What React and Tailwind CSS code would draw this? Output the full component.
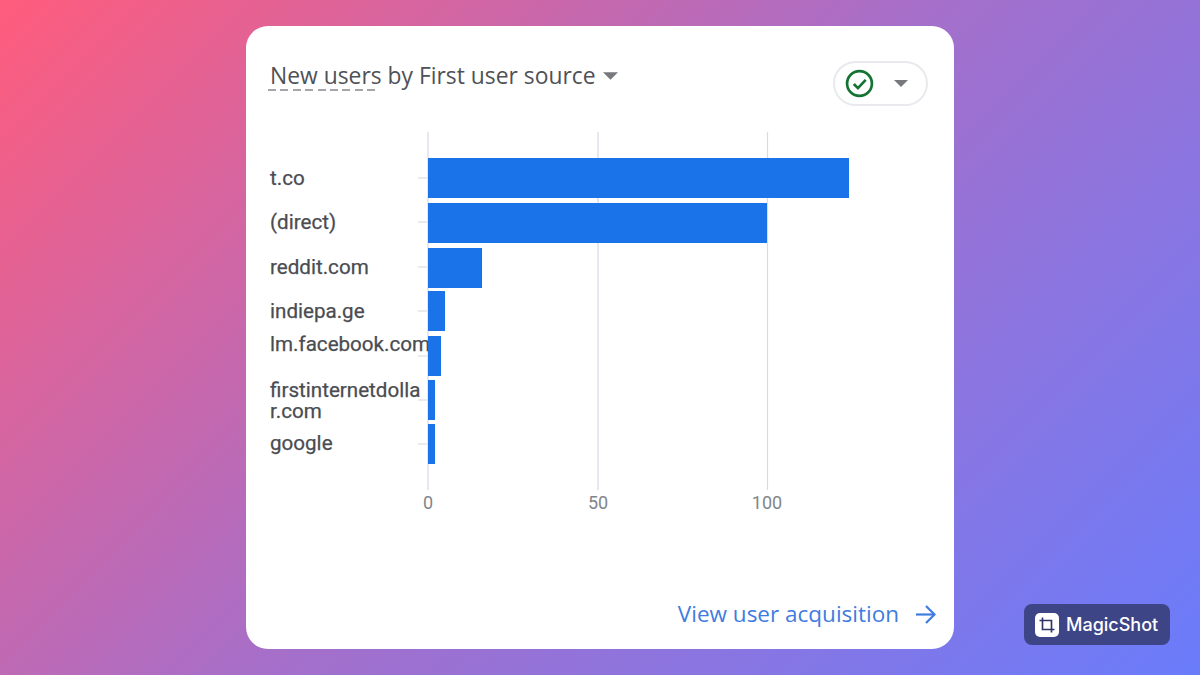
const bars = [
  { y: 26, end: 849, tick: 46 },
  { y: 71, end: 767, tick: 90 },
  { y: 116, end: 482, tick: 135 },
  { y: 159, end: 445, tick: 179 },
  { y: 204, end: 441, tick: 224 },
  { y: 248, end: 435, tick: 268 },
  { y: 292, end: 435, tick: 312 },
];

const labels = [
  { text: 't.co', y: 53 },
  { text: '(direct)', y: 97 },
  { text: 'reddit.com', y: 142 },
  { text: 'indiepa.ge', y: 186 },
  { text: 'lm.facebook.com', y: 219 },
  { text: 'firstinternetdolla', y: 265 },
  { text: 'r.com', y: 285.5 },
  { text: 'google', y: 318 },
];

const axis = [
  { text: '0', x: 182 },
  { text: '50', x: 352 },
  { text: '100', x: 521 },
];

// chart coordinates: x relative to card left edge, y relative to first gridline top
function BarChart() {
  return (
    <svg width="708" height="390" viewBox="0 0 708 390" className="block">
      {[182, 352, 521.5].map((x) => (
        <line key={x} x1={x} x2={x} y1="0" y2="358" stroke="#d8dbe6" strokeWidth="1.25" />
      ))}
      {bars.map((b) => (
        <line key={b.tick} x1="172" x2="182" y1={b.tick} y2={b.tick} stroke="#e4e5e8" strokeWidth="1.5" />
      ))}
      <g fill="#4a4c51" fontSize="20.6" style={{ fontFamily: 'Roboto, sans-serif' }}>
        {labels.map((l) => (
          <text key={l.text} x="24" y={l.y} stroke="#4a4c51" strokeWidth="0.25">{l.text}</text>
        ))}
      </g>
      {bars.map((b) => (
        <rect key={b.y} x="182" y={b.y} width={b.end - 246 - 182} height="40" fill="#1a73e8" />
      ))}
      <g fill="#80868b" fontSize="18" textAnchor="middle" style={{ fontFamily: 'Roboto, sans-serif' }}>
        {axis.map((a) => (
          <text key={a.text} x={a.x} y="377">{a.text}</text>
        ))}
      </g>
    </svg>
  );
}

function Caret({ className }) {
  return (
    <svg viewBox="0 0 16 8" className={className} fill="#76787d">
      <path d="M0 0h16l-8 8z" />
    </svg>
  );
}

export default function App() {
  return (
    <div className="relative flex h-[675px] w-[1200px] items-start justify-center overflow-hidden bg-[linear-gradient(135deg,#ff5c7c_0%,#a56fca_50%,#6a7cfb_100%)] pt-[26px] font-['Open_Sans',sans-serif]">
      <div className="flex h-[623px] w-[708px] flex-col rounded-[22px] bg-white">
        <div className="flex items-start justify-between pl-6 pr-[26px] pt-[35px]">
          <div className="flex items-center">
            <span className="text-[22.85px] font-medium leading-[30px] text-[#4f5156]">
              <span className="relative">
                New users
                <span className="absolute -left-[2px] right-[3px] top-[29px] h-[2px] bg-[repeating-linear-gradient(90deg,#a3a5a9_0_8px,transparent_8px_12.4px)]" />
              </span>{' '}
              by First user source
            </span>
            <Caret className="ml-[7px] h-[8px] w-[15px]" />
          </div>
          <div className="flex h-[45px] w-[95px] items-center rounded-full border-2 border-[#e8eaed] pl-[10px]">
            <svg viewBox="0 0 28 28" className="h-[29px] w-[29px]" fill="none">
              <circle cx="14" cy="14" r="12" stroke="#137333" strokeWidth="2.6" />
              <path d="M8.5 14.5l4 4 7.5-8" stroke="#137333" strokeWidth="2.6" />
            </svg>
            <Caret className="ml-[20px] h-[7px] w-[14px]" />
          </div>
        </div>
        <div className="mt-[26px]">
          <BarChart />
        </div>
        <div className="mt-[77px] flex items-center justify-end gap-[17px] pr-[18px]">
          <span className="text-[22.5px] font-medium leading-[30px] text-[#3f7ce0]">View user acquisition</span>
          <svg viewBox="0 0 20 19" className="h-[19px] w-[20px]" fill="none" stroke="#3f7ce0" strokeWidth="2.2">
            <path d="M0 9.5h18" />
            <path d="M10 1l8.5 8.5L10 18" />
          </svg>
        </div>
      </div>
      <div className="absolute left-[1024px] top-[604px] flex h-[41px] w-[146px] items-center rounded-[8px] bg-[#3d4586] pl-[11px]">
        <div className="flex h-[24px] w-[24px] items-center justify-center rounded-[5px] bg-white">
          <svg viewBox="0 0 24 24" className="h-[18px] w-[18px]" fill="none" stroke="#2f3566" strokeWidth="2.2">
            <path d="M6 2v16h16" />
            <path d="M2 6h16v16" />
          </svg>
        </div>
        <span className="ml-[7px] font-['Inter',sans-serif] text-[18px] font-medium leading-none text-white">MagicShot</span>
      </div>
    </div>
  );
}
